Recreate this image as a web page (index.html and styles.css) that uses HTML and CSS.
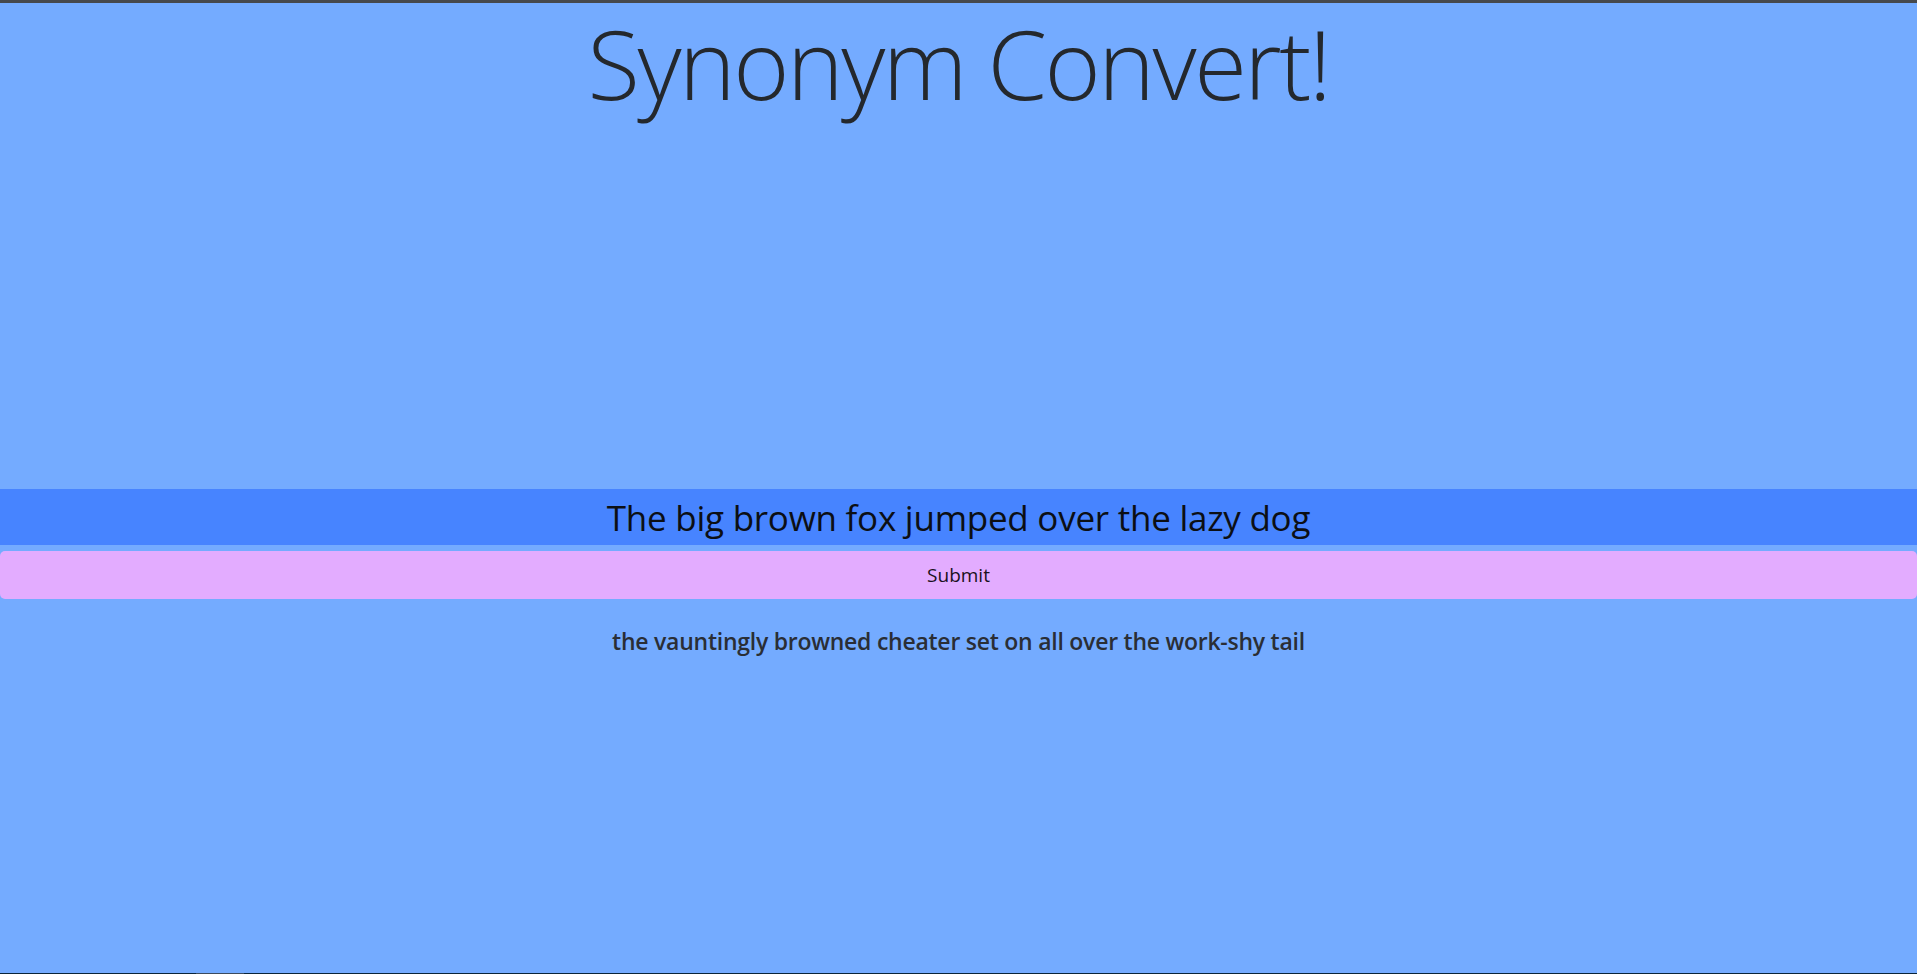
FILE: index.html
```html
<!DOCTYPE html>
<html lang="en">
<head>
<meta charset="utf-8">
<title>Synonym Convert!</title>
<link rel="stylesheet" href="styles.css">
</head>
<body>
<div class="frame-top"></div>
<main class="page">
  <h1 class="title">Synonym Convert!</h1>
  <form class="convert-form">
    <input class="sentence-input" type="text" value="The big brown fox jumped over the lazy dog">
    <button class="submit-btn" type="button">Submit</button>
  </form>
  <h4 class="result">the vauntingly browned cheater set on all over the work-shy tail</h4>
</main>
<div class="frame-bottom"><span class="frame-tab"></span></div>
</body>
</html>
```

FILE: styles.css
```css
html, body {
  margin: 0;
  padding: 0;
  height: 100%;
}

body {
  background: #74abff;
  font-family: "Open Sans", "Noto Sans", "DejaVu Sans", sans-serif;
  color: #212529;
  display: flex;
  flex-direction: column;
  min-height: 100vh;
  box-sizing: border-box;
}

.frame-top {
  height: 3px;
  background: #46494d;
  flex: none;
}

.page {
  flex: 1;
  display: flex;
  flex-direction: column;
  text-align: center;
  padding-top: 2px;
}

.title {
  margin: 0;
  font-size: 96px;
  font-weight: 300;
  line-height: 1.2;
  letter-spacing: -2.5px;
  color: #24282d;
}

.convert-form {
  margin-top: 369px;
  display: flex;
  flex-direction: column;
  gap: 6px;
}

.sentence-input {
  display: block;
  width: 100%;
  box-sizing: border-box;
  height: 56px;
  margin: 0;
  border: none;
  outline: none;
  background: #4784ff;
  color: #0c0f14;
  font-family: inherit;
  font-size: 35px;
  letter-spacing: -0.25px;
  text-align: center;
  padding: 0;
}

.submit-btn {
  display: block;
  width: 100%;
  height: 48px;
  margin: 0;
  border: none;
  border-radius: 5px;
  background: #e3acff;
  color: #1a1020;
  font-family: inherit;
  font-size: 19px;
  line-height: 1.5;
  padding: 8px 16px;
}

.result {
  margin: 29px 0 0;
  font-size: 23px;
  font-weight: 600;
  line-height: 1.2;
  letter-spacing: -0.25px;
  color: #2a2e35;
}

.frame-bottom {
  flex: none;
  height: 1px;
  background: #0a2438;
  display: flex;
}

.frame-tab {
  margin-left: 196px;
  width: 48px;
  background: #3b4a5c;
}
```
